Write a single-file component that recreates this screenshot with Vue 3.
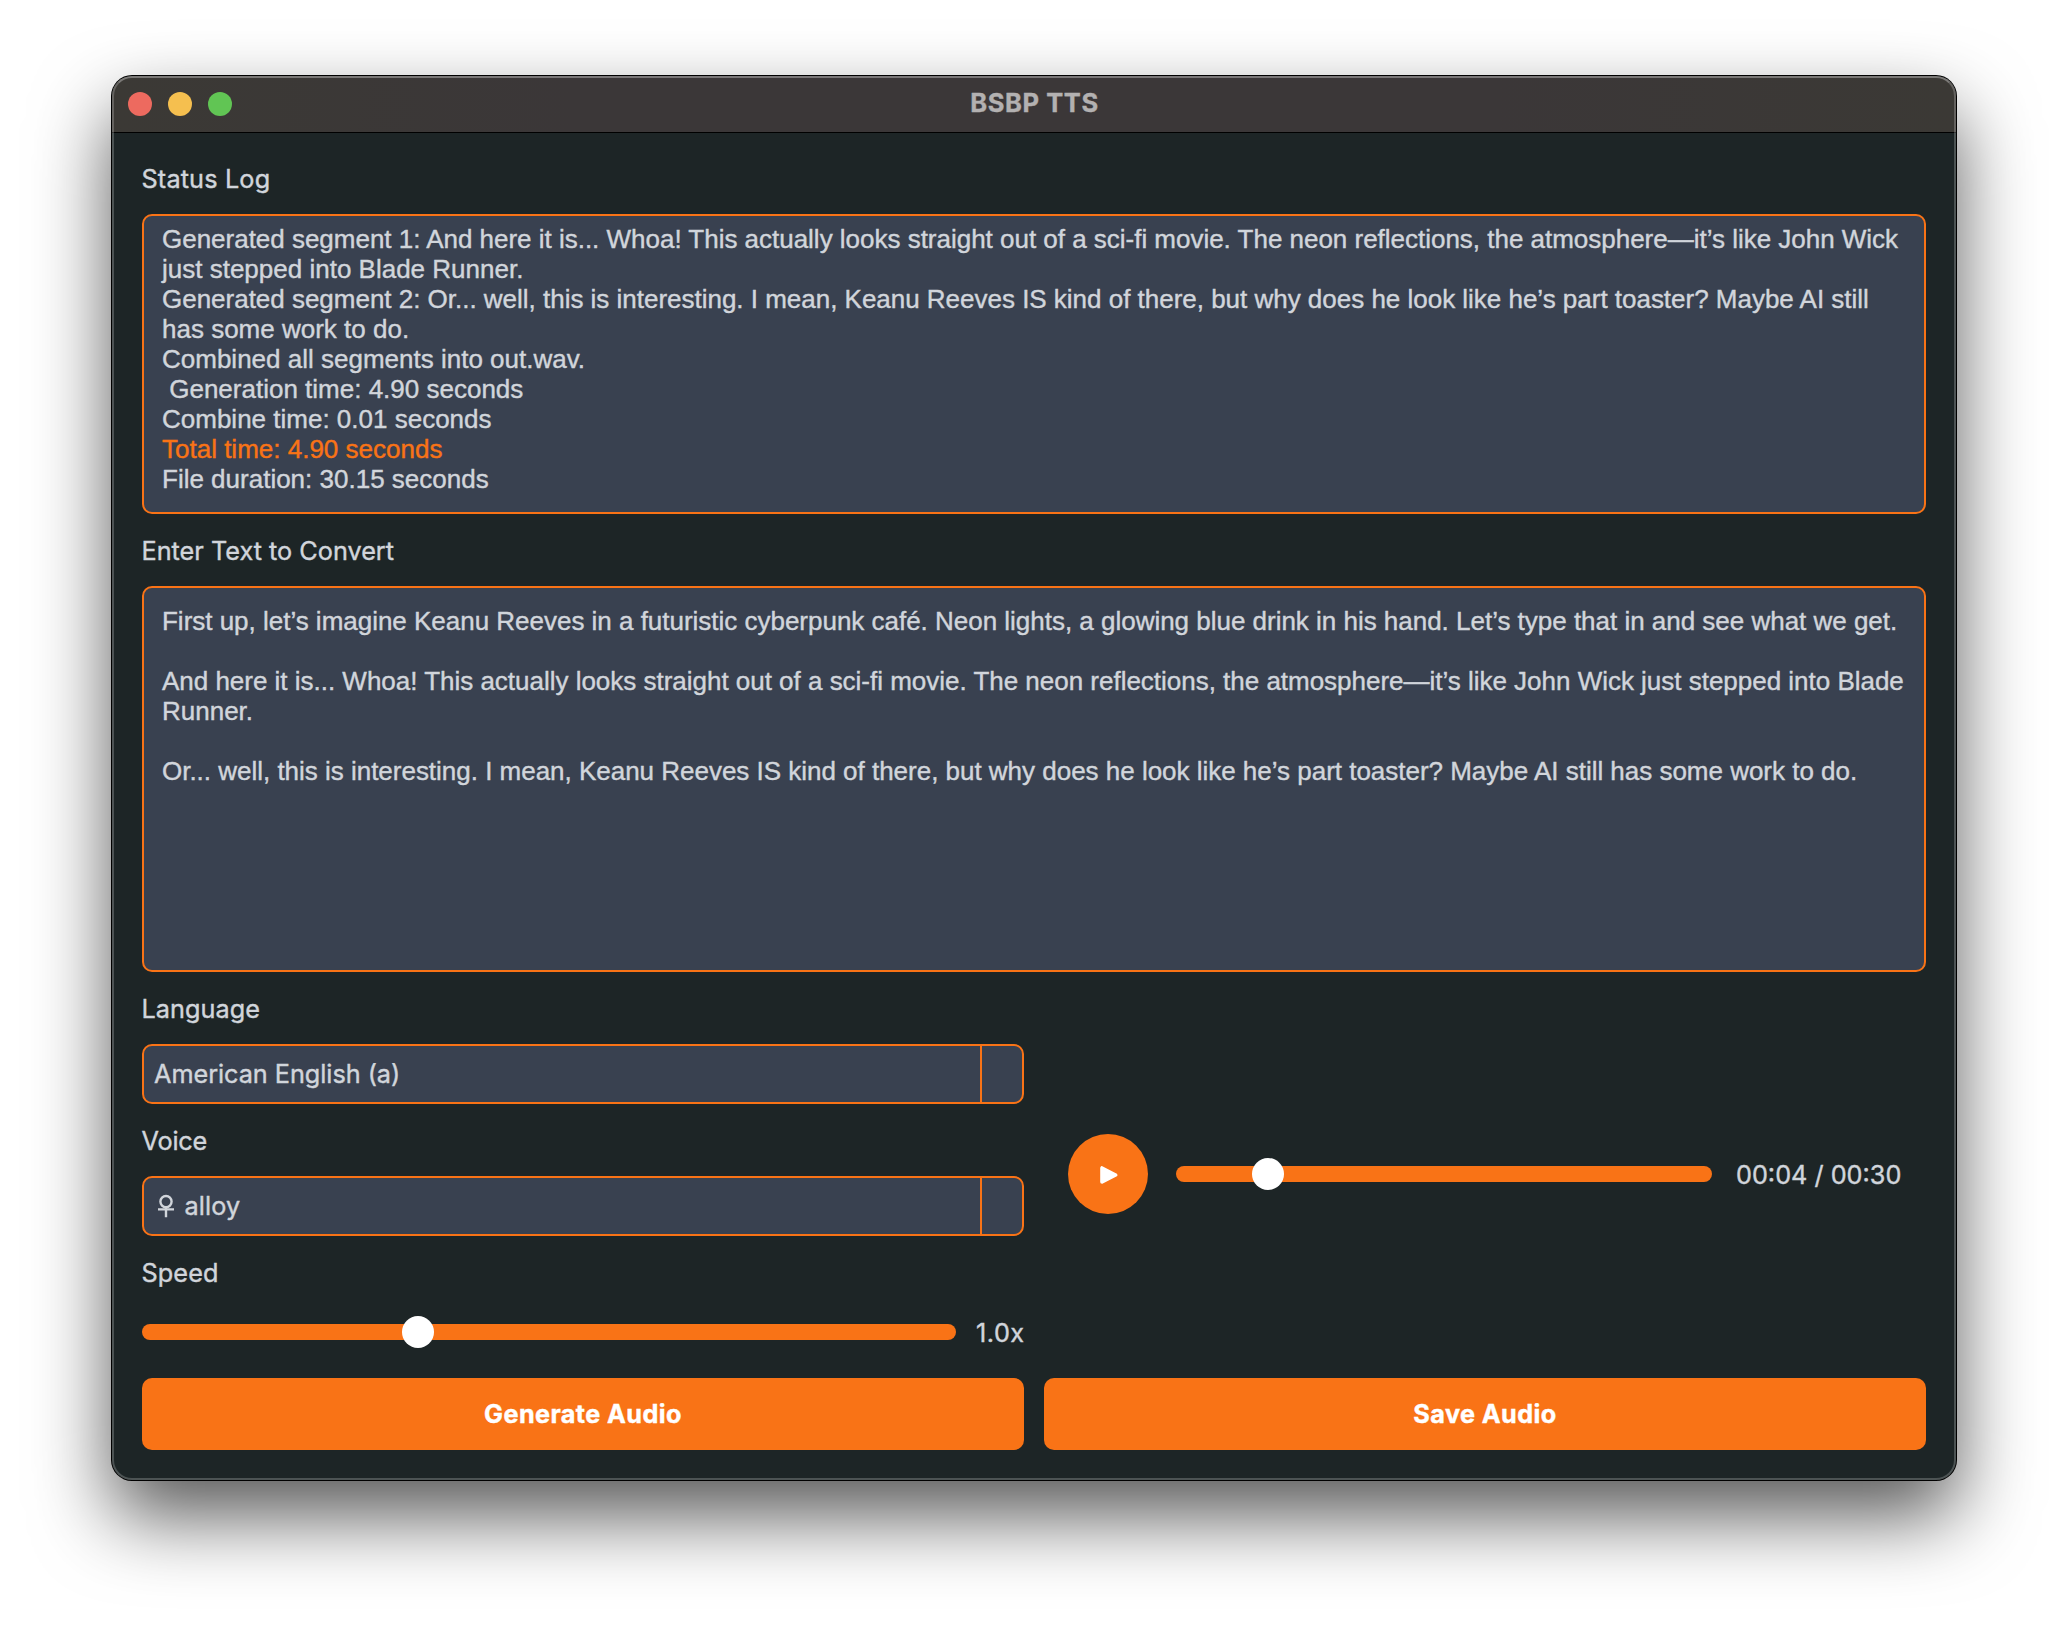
<script setup>
const log = [
  { text: 'Generated segment 1: And here it is... Whoa! This actually looks straight out of a sci-fi movie. The neon reflections, the atmosphere—it’s like John Wick', cls: 'tight' },
  { text: 'just stepped into Blade Runner.' },
  { text: 'Generated segment 2: Or... well, this is interesting. I mean, Keanu Reeves IS kind of there, but why does he look like he’s part toaster? Maybe AI still', cls: 'tight' },
  { text: 'has some work to do.' },
  { text: 'Combined all segments into out.wav.' },
  { text: ' Generation time: 4.90 seconds' },
  { text: 'Combine time: 0.01 seconds' },
  { text: 'Total time: 4.90 seconds', cls: 'accent' },
  { text: 'File duration: 30.15 seconds' },
]
const script = [
  { text: 'First up, let’s imagine Keanu Reeves in a futuristic cyberpunk café. Neon lights, a glowing blue drink in his hand. Let’s type that in and see what we get.', cls: 'tight' },
  { text: '' },
  { text: 'And here it is... Whoa! This actually looks straight out of a sci-fi movie. The neon reflections, the atmosphere—it’s like John Wick just stepped into Blade', cls: 'tight' },
  { text: 'Runner.' },
  { text: '' },
  { text: 'Or... well, this is interesting. I mean, Keanu Reeves IS kind of there, but why does he look like he’s part toaster? Maybe AI still has some work to do.', cls: 'tight' },
]
</script>

<template>
  <div class="desktop">
    <div class="window">
      <header class="titlebar">
        <div class="lights">
          <span class="light red"></span>
          <span class="light yellow"></span>
          <span class="light green"></span>
        </div>
        <h1 class="title">BSBP TTS</h1>
      </header>

      <main class="content">
        <div class="label status">Status Log</div>
        <div class="box log">
          <p v-for="(l, i) in log" :key="i" class="line" :class="l.cls">{{ l.text }}</p>
        </div>

        <div class="label enter">Enter Text to Convert</div>
        <div class="box entry">
          <p v-for="(l, i) in script" :key="i" class="line" :class="l.cls">{{ l.text }}</p>
        </div>

        <div class="controls">
          <section class="settings">
            <div class="label language">Language</div>
            <div class="select">
              <span class="value">American English (a)</span>
              <span class="drop"></span>
            </div>
            <div class="label voice">Voice</div>
            <div class="select">
              <span class="value voice-value">
                <svg class="female" width="18" height="26" viewBox="0 0 18 26" fill="none" stroke="currentColor" stroke-width="2.4">
                  <circle cx="9" cy="8.6" r="5.6" />
                  <path d="M9 14v10.2M1 16.4h16" />
                </svg>
                <span>alloy</span>
              </span>
              <span class="drop"></span>
            </div>
            <div class="label speed">Speed</div>
            <div class="speed-row">
              <div class="slider"><span class="thumb" :style="{ left: '260px' }"></span></div>
              <span class="rate">1.0x</span>
            </div>
          </section>

          <section class="player">
            <button class="play" aria-label="Play">
              <svg width="18" height="18" viewBox="0 0 18 18">
                <path d="M2 2v14L15.6 9z" fill="#fff" stroke="#fff" stroke-width="3.6" stroke-linejoin="round" />
              </svg>
            </button>
            <div class="slider"><span class="thumb" :style="{ left: '76px' }"></span></div>
            <span class="time">00:04 / 00:30</span>
          </section>
        </div>

        <div class="actions">
          <button class="action generate">Generate Audio</button>
          <button class="action save">Save Audio</button>
        </div>
      </main>
    </div>
  </div>
</template>

<style>
body {
  margin: 0;
  background: #fff;
}
</style>

<style scoped>
* {
  box-sizing: border-box;
}
.desktop {
  width: 2068px;
  height: 1628px;
  padding: 76px 112px 0;
  overflow: hidden;
  background: #fff;
  font-family: Inter, 'Liberation Sans', sans-serif;
  font-size: 25.25px;
  color: #d1d5db;
  -webkit-text-stroke: 0.4px currentColor;
}
.window {
  position: relative;
  width: 1844px;
  height: 1404px;
  border-radius: 20px;
  background: #1d2526;
  box-shadow: 0 0 0 1px #000, 0 36px 78px rgba(0, 0, 0, 0.66);
}
.window::after {
  content: '';
  position: absolute;
  inset: 0;
  border: 2px solid rgba(255, 255, 255, 0.21);
  border-top-color: rgba(255, 255, 255, 0.32);
  border-radius: 20px;
  pointer-events: none;
}
.titlebar {
  display: grid;
  grid-template-columns: 1fr auto 1fr;
  align-items: center;
  height: 57px;
  padding: 0 16px;
  border-bottom: 1px solid #000;
  border-radius: 20px 20px 0 0;
  background: linear-gradient(90deg, #3b3935, #3b3738 25%, #3b3738 75%, #3b3935);
}
.lights {
  display: flex;
  gap: 16px;
}
.light {
  width: 24px;
  height: 24px;
  border-radius: 50%;
}
.red {
  background: #ed6a5f;
}
.yellow {
  background: #f5bf4f;
}
.green {
  background: #61c554;
}
.title {
  margin: 0;
  padding: 0 0 3px 1px;
  font-size: 25.5px;
  line-height: 30px;
  font-weight: 700;
  letter-spacing: 0.6px;
  color: #b3b1b1;
}
.content {
  display: flex;
  flex-direction: column;
  padding: 30px;
}
.label {
  height: 32px;
  margin: 0 0 19px -0.5px;
  line-height: 32px;
  white-space: nowrap;
}
.status {
  letter-spacing: 0.15px;
}
.enter {
  margin-top: 21px;
  letter-spacing: 0;
}
.language {
  letter-spacing: 0.05px;
}
.voice {
  margin-top: 21px;
  letter-spacing: -0.2px;
}
.speed {
  margin-top: 21px;
  margin-bottom: 27px;
  letter-spacing: 0.1px;
}
.box {
  border: 2px solid #f97316;
  border-radius: 10px;
  background: #394150;
  font: 26px/30px 'Liberation Sans', Arial, sans-serif;
}
.log {
  height: 300px;
  padding: 8px 18px;
}
.entry {
  height: 386px;
  padding: 18px;
}
.line {
  height: 30px;
  margin: 0;
  white-space: pre;
}
.tight {
  letter-spacing: -0.016px;
}
.accent {
  color: #f97316;
}
.controls {
  display: grid;
  grid-template-columns: 882px 882px;
  gap: 20px;
  margin-top: 21px;
}
.select {
  display: flex;
  height: 60px;
  border: 2px solid #f97316;
  border-radius: 10px;
  background: #394150;
}
.value {
  flex: 1;
  padding-left: 10px;
  line-height: 56px;
  letter-spacing: -0.04px;
}
.voice-value {
  display: flex;
  align-items: center;
  gap: 9.5px;
  padding-left: 13px;
  letter-spacing: 0.1px;
}
.drop {
  width: 42px;
  border-left: 2px solid #f97316;
}
.speed-row {
  display: flex;
  align-items: center;
  height: 32px;
  gap: 20px;
}
.slider {
  position: relative;
  flex: none;
  height: 16px;
  border-radius: 8px;
  background: #f97316;
}
.speed-row .slider {
  width: 814px;
}
.thumb {
  position: absolute;
  top: -8px;
  width: 32px;
  height: 32px;
  border-radius: 50%;
  background: #fff;
}
.rate {
  padding-top: 1px;
  letter-spacing: 0.5px;
}
.player {
  display: flex;
  align-items: center;
  padding: 7px 0 0 24px;
}
.play {
  display: flex;
  align-items: center;
  justify-content: center;
  flex: none;
  width: 80px;
  height: 80px;
  margin-right: 28px;
  padding: 1px 0 0 1px;
  border: 0;
  border-radius: 50%;
  background: #f97316;
}
.player .slider {
  width: 536px;
  margin-right: 24px;
}
.time {
  padding-top: 1px;
  white-space: nowrap;
}
.actions {
  display: flex;
  gap: 20px;
  margin-top: 30px;
}
.action {
  flex: 1;
  height: 72px;
  padding: 0;
  border: 0;
  border-radius: 10px;
  background: #f97316;
  color: #fff;
  font: 700 25.25px/32px Inter, sans-serif;
  letter-spacing: 0.4px;
}
</style>
